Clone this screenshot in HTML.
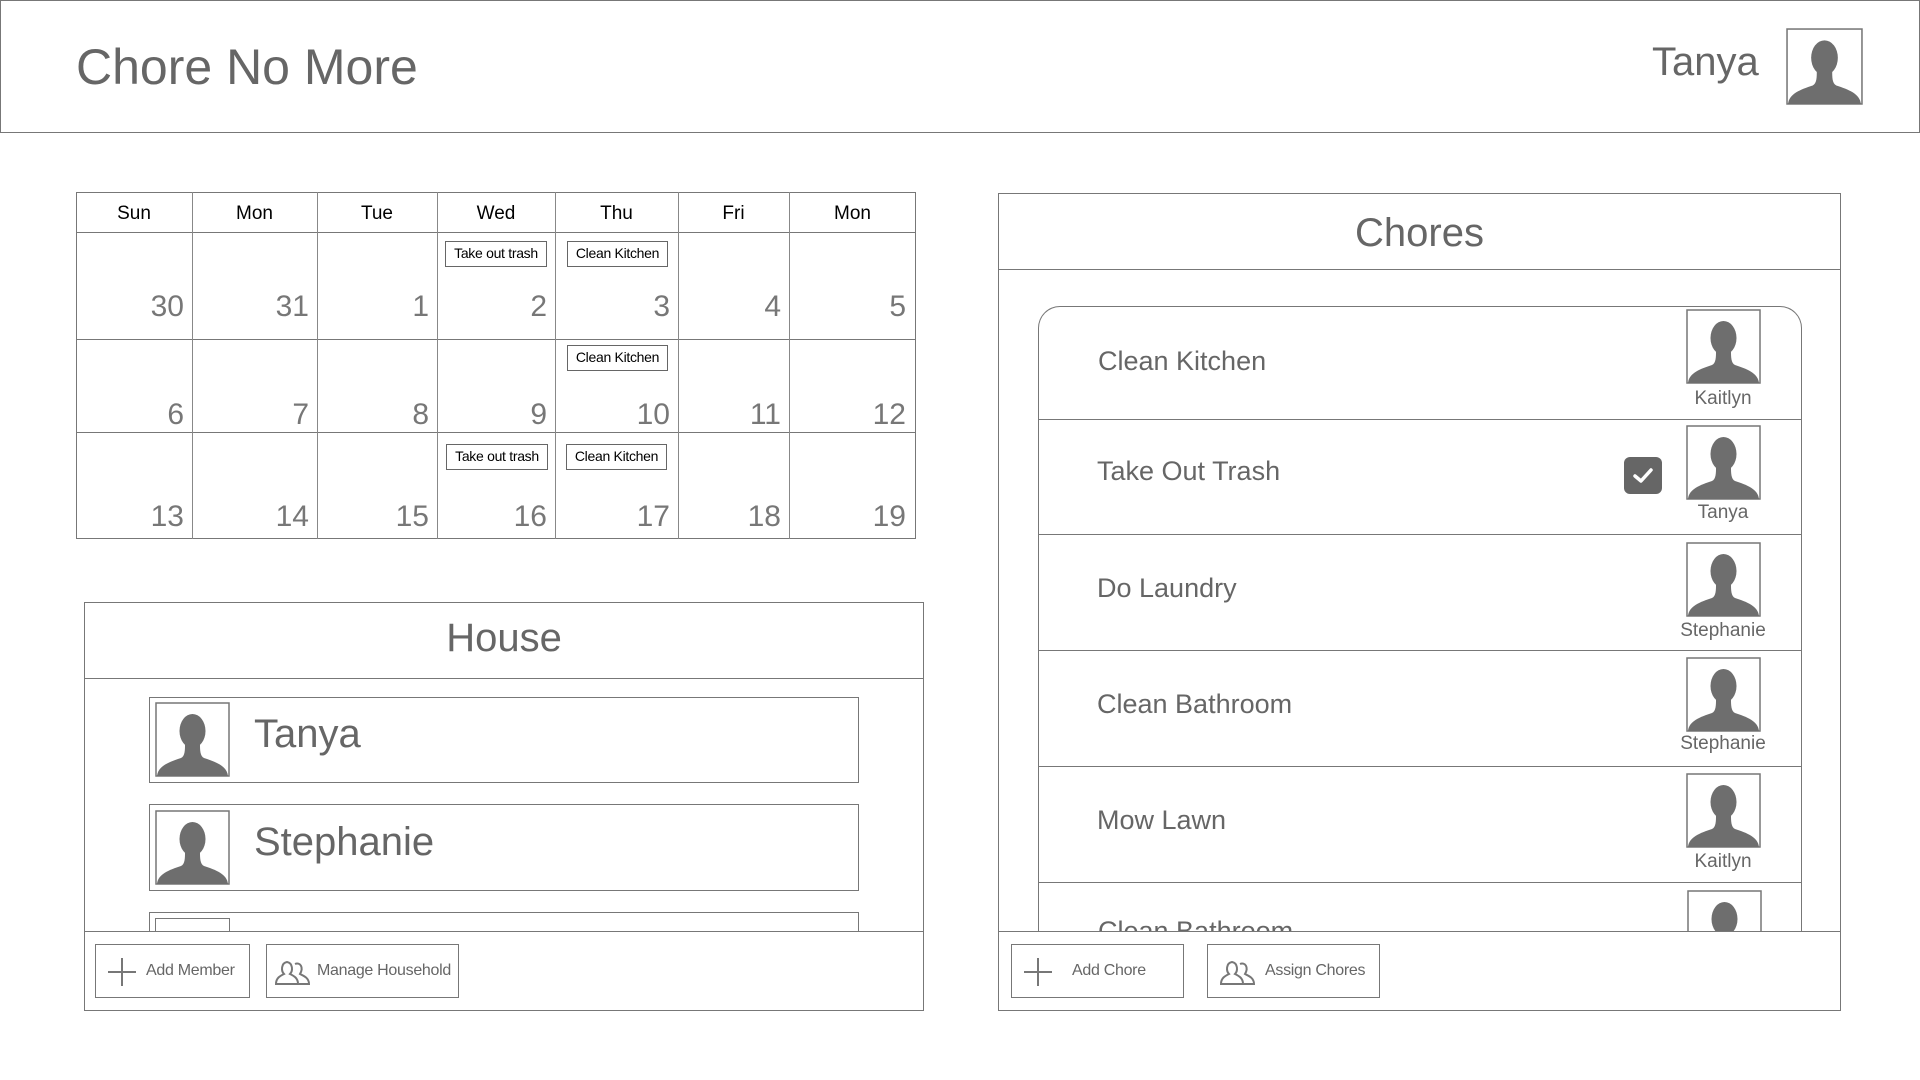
<!DOCTYPE html>
<html><head><meta charset="utf-8"><style>
*{box-sizing:border-box;margin:0;padding:0}
body{width:1920px;height:1080px;background:#fff;position:relative;overflow:hidden;font-family:"Liberation Sans",sans-serif;color:#666}
.a{position:absolute}
.b{border:1.5px solid #777}
.av{position:absolute;width:75px;height:75px}
.ev{position:absolute;border:1.5px solid #666;background:#fff;font-size:14px;color:#000;text-align:center;line-height:23px;white-space:nowrap;letter-spacing:-0.3px}
.num{position:absolute;font-size:30px;color:#777;text-align:right}
.dh{position:absolute;top:192px;height:41px;line-height:43px;text-align:center;font-size:19px;color:#000}
.row{position:absolute;left:1038px;width:763px;border-bottom:1.5px solid #777}
.ct{position:absolute;left:60px;font-size:27px;color:#666}
.nm{position:absolute;font-size:19px;color:#666;text-align:center;width:120px}
.btn{position:absolute;border:1.5px solid #777;height:54px;font-size:16px;line-height:52px;color:#666;white-space:nowrap;letter-spacing:-0.3px}
</style></head><body>
<svg width="0" height="0" style="position:absolute"><defs>
<symbol id="p" viewBox="0 0 75 75"><rect x="1" y="1" width="73" height="73" fill="#fff" stroke="#777" stroke-width="1.5"/><ellipse cx="37.5" cy="29" rx="13" ry="17" fill="#6e6e6e"/><path d="M2 74 C3 64 14 60 26 56 C30 54 30 48 30 42 L45 42 C45 48 45 54 49 56 C61 60 72 64 73 74 Z" fill="#6e6e6e"/></symbol>
</defs></svg>

<div class="a b" style="left:0;top:0;width:1920px;height:133px"></div>
<div class="a" style="left:76px;top:38px;font-size:50px;color:#666">Chore No More</div>
<div class="a" style="left:1652px;top:40px;font-size:40px;color:#666">Tanya</div>
<svg class="av" style="left:1786px;top:28px;width:77px;height:77px"><use href="#p"/></svg>

<div class="a" style="left:76px;top:192px;width:840px;height:347px;border:1.5px solid #777"></div>
<div class="a" style="left:76px;top:232px;width:840px;border-top:1.5px solid #777"></div>
<div class="a" style="left:76px;top:339px;width:840px;border-top:1.5px solid #777"></div>
<div class="a" style="left:76px;top:432px;width:840px;border-top:1.5px solid #777"></div>
<div class="a" style="left:192px;top:192px;height:347px;border-left:1px solid #888"></div>
<div class="a" style="left:317px;top:192px;height:347px;border-left:1px solid #888"></div>
<div class="a" style="left:437px;top:192px;height:347px;border-left:1px solid #888"></div>
<div class="a" style="left:555px;top:192px;height:347px;border-left:1px solid #888"></div>
<div class="a" style="left:678px;top:192px;height:347px;border-left:1px solid #888"></div>
<div class="a" style="left:789px;top:192px;height:347px;border-left:1px solid #888"></div>
<div class="dh" style="left:76px;width:116px">Sun</div>
<div class="dh" style="left:192px;width:125px">Mon</div>
<div class="dh" style="left:317px;width:120px">Tue</div>
<div class="dh" style="left:437px;width:118px">Wed</div>
<div class="dh" style="left:555px;width:123px">Thu</div>
<div class="dh" style="left:678px;width:111px">Fri</div>
<div class="dh" style="left:789px;width:127px">Mon</div>

<div class="ev" style="left:445px;top:241px;width:102px;height:26px">Take out trash</div>
<div class="ev" style="left:567px;top:241px;width:101px;height:26px">Clean Kitchen</div>
<div class="ev" style="left:567px;top:345px;width:101px;height:26px">Clean Kitchen</div>
<div class="ev" style="left:446px;top:444px;width:102px;height:26px">Take out trash</div>
<div class="ev" style="left:566px;top:444px;width:101px;height:26px">Clean Kitchen</div>

<div class="num" style="left:76px;width:108px;top:290px">30</div>
<div class="num" style="left:192px;width:117px;top:290px">31</div>
<div class="num" style="left:317px;width:112px;top:290px">1</div>
<div class="num" style="left:437px;width:110px;top:290px">2</div>
<div class="num" style="left:555px;width:115px;top:290px">3</div>
<div class="num" style="left:678px;width:103px;top:290px">4</div>
<div class="num" style="left:789px;width:117px;top:290px">5</div>
<div class="num" style="left:76px;width:108px;top:398px">6</div>
<div class="num" style="left:192px;width:117px;top:398px">7</div>
<div class="num" style="left:317px;width:112px;top:398px">8</div>
<div class="num" style="left:437px;width:110px;top:398px">9</div>
<div class="num" style="left:555px;width:115px;top:398px">10</div>
<div class="num" style="left:678px;width:103px;top:398px">11</div>
<div class="num" style="left:789px;width:117px;top:398px">12</div>
<div class="num" style="left:76px;width:108px;top:500px">13</div>
<div class="num" style="left:192px;width:117px;top:500px">14</div>
<div class="num" style="left:317px;width:112px;top:500px">15</div>
<div class="num" style="left:437px;width:110px;top:500px">16</div>
<div class="num" style="left:555px;width:115px;top:500px">17</div>
<div class="num" style="left:678px;width:103px;top:500px">18</div>
<div class="num" style="left:789px;width:117px;top:500px">19</div>

<div class="a b" style="left:84px;top:602px;width:840px;height:409px"></div>
<div class="a" style="left:84px;top:678px;width:840px;border-top:1.5px solid #777"></div>
<div class="a" style="left:84px;top:602px;width:840px;height:76px;line-height:72px;text-align:center;font-size:40px">House</div>
<div class="a b" style="left:149px;top:697px;width:710px;height:86px"></div>
<svg class="av" style="left:155px;top:702px"><use href="#p"/></svg>
<div class="a" style="left:254px;top:712px;font-size:40px">Tanya</div>
<div class="a b" style="left:149px;top:804px;width:710px;height:87px"></div>
<svg class="av" style="left:155px;top:810px"><use href="#p"/></svg>
<div class="a" style="left:254px;top:820px;font-size:40px">Stephanie</div>
<div class="a" style="left:149px;top:912px;width:710px;height:19px;border:1.5px solid #777;border-bottom:none"></div>
<div class="a" style="left:155px;top:918px;width:75px;height:13px;border:1.5px solid #777;border-bottom:none"></div>
<div class="a" style="left:84px;top:931px;width:840px;border-top:1.5px solid #777"></div>
<div class="btn" style="left:95px;top:944px;width:155px"><span style="position:absolute;left:12px;top:13px;width:28px;height:28px"><span class="a" style="left:13px;top:0;width:2px;height:28px;background:#777"></span><span class="a" style="left:0;top:13px;width:28px;height:2px;background:#777"></span></span><span style="position:absolute;left:50px">Add Member</span></div>
<div class="btn" style="left:266px;top:944px;width:193px"><svg class="a" style="left:8px;top:14px" width="36" height="26" viewBox="0 0 36 26" fill="none" stroke="#777" stroke-width="2"><path d="M1 25 C1 19 5 17 9 15 C6 12 6 4 12 3 C18 4 18 12 15 15 C19 17 23 19 23 25 Z"/><path d="M20 5 C25 3 29 8 25 15 C29 17 34 19 34 25 L24 25"/></svg><span style="position:absolute;left:50px">Manage Household</span></div>

<div class="a b" style="left:998px;top:193px;width:843px;height:818px"></div>
<div class="a" style="left:998px;top:269px;width:843px;border-top:1.5px solid #777"></div>
<div class="a" style="left:998px;top:193px;width:843px;height:76px;line-height:80px;text-align:center;font-size:40px">Chores</div>
<div class="a" style="left:1038px;top:306px;width:764px;height:625px;border:1.5px solid #777;border-bottom:none;border-radius:22px 22px 0 0"></div>
<div class="row" style="top:306px;height:114px"><div class="ct" style="top:40px">Clean Kitchen</div><svg class="av" style="left:648px;top:3px"><use href="#p"/></svg><div class="nm" style="left:625px;top:82px">Kaitlyn</div></div>
<div class="row" style="top:420px;height:115px"><div class="ct" style="top:36px;left:59px">Take Out Trash</div><div class="a" style="left:586px;top:37px;width:38px;height:37px;background:#666;border-radius:6px"><svg width="38" height="37" viewBox="0 0 38 37"><path d="M11 19 L17 24 L27 13" stroke="#fff" stroke-width="3.5" fill="none" stroke-linecap="round" stroke-linejoin="round"/></svg></div><svg class="av" style="left:648px;top:5px"><use href="#p"/></svg><div class="nm" style="left:625px;top:82px">Tanya</div></div>
<div class="row" style="top:535px;height:116px"><div class="ct" style="top:38px;left:59px">Do Laundry</div><svg class="av" style="left:648px;top:7px"><use href="#p"/></svg><div class="nm" style="left:625px;top:85px">Stephanie</div></div>
<div class="row" style="top:651px;height:116px"><div class="ct" style="top:38px;left:59px">Clean Bathroom</div><svg class="av" style="left:648px;top:6px"><use href="#p"/></svg><div class="nm" style="left:625px;top:82px">Stephanie</div></div>
<div class="row" style="top:767px;height:116px"><div class="ct" style="top:38px;left:59px">Mow Lawn</div><svg class="av" style="left:648px;top:6px"><use href="#p"/></svg><div class="nm" style="left:625px;top:84px">Kaitlyn</div></div>
<div class="a" style="left:1039px;top:884px;width:761px;height:47px;overflow:hidden"><div class="ct" style="top:32px;left:59px">Clean Bathroom</div><svg class="av" style="left:648px;top:6px"><use href="#p"/></svg></div>
<div class="a" style="left:999px;top:931px;width:841px;height:79px;background:#fff;border-top:1.5px solid #777"></div>
<div class="btn" style="left:1011px;top:944px;width:173px"><span style="position:absolute;left:12px;top:13px;width:28px;height:28px"><span class="a" style="left:13px;top:0;width:2px;height:28px;background:#777"></span><span class="a" style="left:0;top:13px;width:28px;height:2px;background:#777"></span></span><span style="position:absolute;left:60px">Add Chore</span></div>
<div class="btn" style="left:1207px;top:944px;width:173px"><svg class="a" style="left:12px;top:14px" width="36" height="26" viewBox="0 0 36 26" fill="none" stroke="#777" stroke-width="2"><path d="M1 25 C1 19 5 17 9 15 C6 12 6 4 12 3 C18 4 18 12 15 15 C19 17 23 19 23 25 Z"/><path d="M20 5 C25 3 29 8 25 15 C29 17 34 19 34 25 L24 25"/></svg><span style="position:absolute;left:57px">Assign Chores</span></div>
</body></html>
